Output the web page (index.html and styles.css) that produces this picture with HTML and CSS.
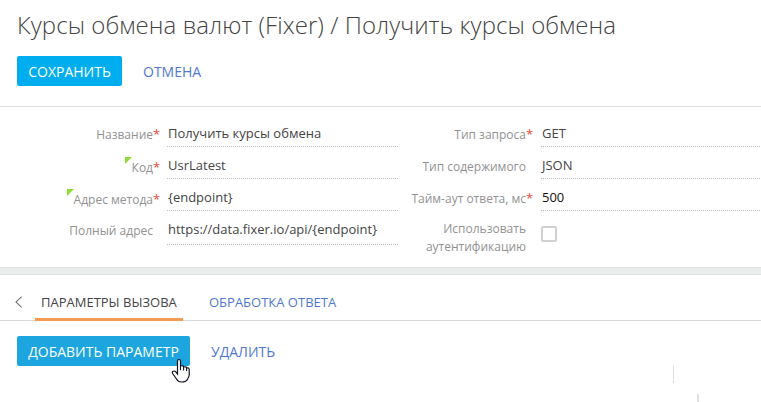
FILE: index.html
```html
<!DOCTYPE html>
<html lang="ru">
<head>
<meta charset="utf-8">
<title>Получить курсы обмена</title>
<link rel="stylesheet" href="styles.css">
</head>
<body>
<header class="header">
  <h1 class="title">Курсы обмена валют (Fixer) / Получить курсы обмена</h1>
  <div class="actions">
    <button class="btn btn-save">СОХРАНИТЬ</button>
    <button class="link">ОТМЕНА</button>
  </div>
</header>
<main class="form">
  <div class="column">
    <div class="row"><label class="label required">Название</label><div class="value">Получить курсы обмена</div></div>
    <div class="row"><label class="label low required marked">Код</label><div class="value">UsrLatest</div></div>
    <div class="row"><label class="label low required marked">Адрес метода</label><div class="value">{endpoint}</div></div>
    <div class="row row-tall"><label class="label">Полный адрес</label><div class="value">https://data.fixer.io/api/{endpoint}</div></div>
  </div>
  <div class="column">
    <div class="row"><label class="label required">Тип запроса</label><div class="value">GET</div></div>
    <div class="row"><label class="label">Тип содержимого</label><div class="value">JSON</div></div>
    <div class="row"><label class="label required">Тайм-аут ответа, мс</label><div class="value number">500</div></div>
    <div class="row row-check"><label class="label auth">Использовать<br>аутентификацию</label><span class="checkbox"></span></div>
  </div>
</main>
<div class="divider"></div>
<nav class="tabs">
  <svg class="prev" width="8" height="12" viewBox="0 0 8 12"><path d="M6.6 .6 1 6l5.600 5.400" fill="none" stroke="#777" stroke-width="1.100"/></svg>
  <a class="tab active">ПАРАМЕТРЫ ВЫЗОВА</a>
  <a class="tab">ОБРАБОТКА ОТВЕТА</a>
</nav>
<section class="detail">
  <button class="btn btn-add">ДОБАВИТЬ ПАРАМЕТР</button>
  <button class="link">УДАЛИТЬ</button>
  <svg class="cursor" width="20" height="26" viewBox="0 0 20 26"><path d="M6.500 14V3.200Q6.500 1.500 8 1.500T9.500 3.200V8Q12.500 7.200 12.700 9Q15.300 8.200 15.600 10Q18.200 9.200 18.200 11.500V17Q18 19 16.600 21Q15.500 24 10.500 24Q7 24 5.500 21L1.600 15.500Q.7 14 2.200 13.200Q3.600 12.500 5 14.200L6.500 16Z" fill="#fff" stroke="#111322" stroke-width="1.200"/><path d="M9.500 7.500v4.700M12.600 8.800v3.800M15.600 9.700v3.300" fill="none" stroke="#111322" stroke-width="1.100"/></svg>
  <i class="tick tick-upper"></i>
  <i class="tick tick-lower"></i>
</section>
</body>
</html>
```
FILE: styles.css
```css
* { box-sizing: border-box; }
body {
  margin: 0;
  width: 761px;
  height: 402px;
  overflow: hidden;
  background: #fff;
  color: #444;
  font: 13px/18px "Open Sans", sans-serif;
  white-space: nowrap;
}
button { height: 30px; border: 0; padding: 2px 0 0; background: none; font: inherit; white-space: nowrap; }
.header { height: 107px; padding: 7px 17px 0; border-bottom: 1px solid #e1e1e1; }
.title { margin: 0; height: 49px; font-size: 24px; line-height: 35px; font-weight: 300; letter-spacing: .06px; color: #444; }
.actions { display: flex; height: 30px; }
.btn { border-radius: 2px; color: #fff; font-size: 14px; line-height: 28px; }
.btn-save { width: 105px; background: #00aeef; }
.btn-add { width: 173px; background: #1ca5de; }
.link { margin-left: 21px; color: #5078d0; font-size: 14px; line-height: 28px; }
.form { display: grid; grid-template-columns: 398px 363px; height: 160px; padding-top: 14px; }
.row { display: grid; height: 32px; }
.column:first-child .row { grid-template-columns: 153px 231px; column-gap: 14px; }
.column:last-child .row { grid-template-columns: 128px 220px; column-gap: 15px; }
.label { position: relative; justify-self: end; height: 18px; margin-top: 5px; color: #929292; font-size: 12px; }
.label.low { margin-top: 6px; }
.required::after { content: "*"; position: absolute; left: 100%; top: -1px; color: #ef4a3a; font-size: 13px; }
.marked::before { content: ""; position: absolute; left: -7px; top: -2px; border-top: 7px solid #8ddd32; border-right: 7px solid transparent; }
.value { height: 26px; padding: 3px 0 0 1px; background: repeating-linear-gradient(90deg, #bbb 0 1px, transparent 1px 2px) bottom / 100% 1px no-repeat; }
.number { color: #111; }
.row-tall .value { height: 28px; }
.row-check { height: 40px; }
.auth { text-align: right; margin-top: 3px; }
.checkbox { width: 16px; height: 16px; margin-top: 9px; border: 2px solid #d0d0d0; border-radius: 2px; }
.divider { height: 8px; border: solid #dfe2e2; border-width: 1px 0; background: #e9eeed; }
.tabs { display: flex; height: 46px; border-bottom: 1px solid #d9d9d9; }
.prev { margin: 21px 12px 0 15px; }
.tab { height: 46px; padding: 18px 6px 0; color: #5078d0; }
.active { width: 148px; border-bottom: 3px solid #f39b53; color: #444; }
.tab + .tab { margin-left: 20px; }
.detail { position: relative; display: flex; height: 81px; padding: 15px 17px 0; }
.cursor { position: absolute; left: 170.500px; top: 36.500px; }
.tick { position: absolute; background: #e0e0e0; }
.tick-upper { left: 673px; top: 45px; width: 1px; height: 17px; }
.tick-lower { left: 697px; top: 73px; width: 2px; height: 8px; }
```
